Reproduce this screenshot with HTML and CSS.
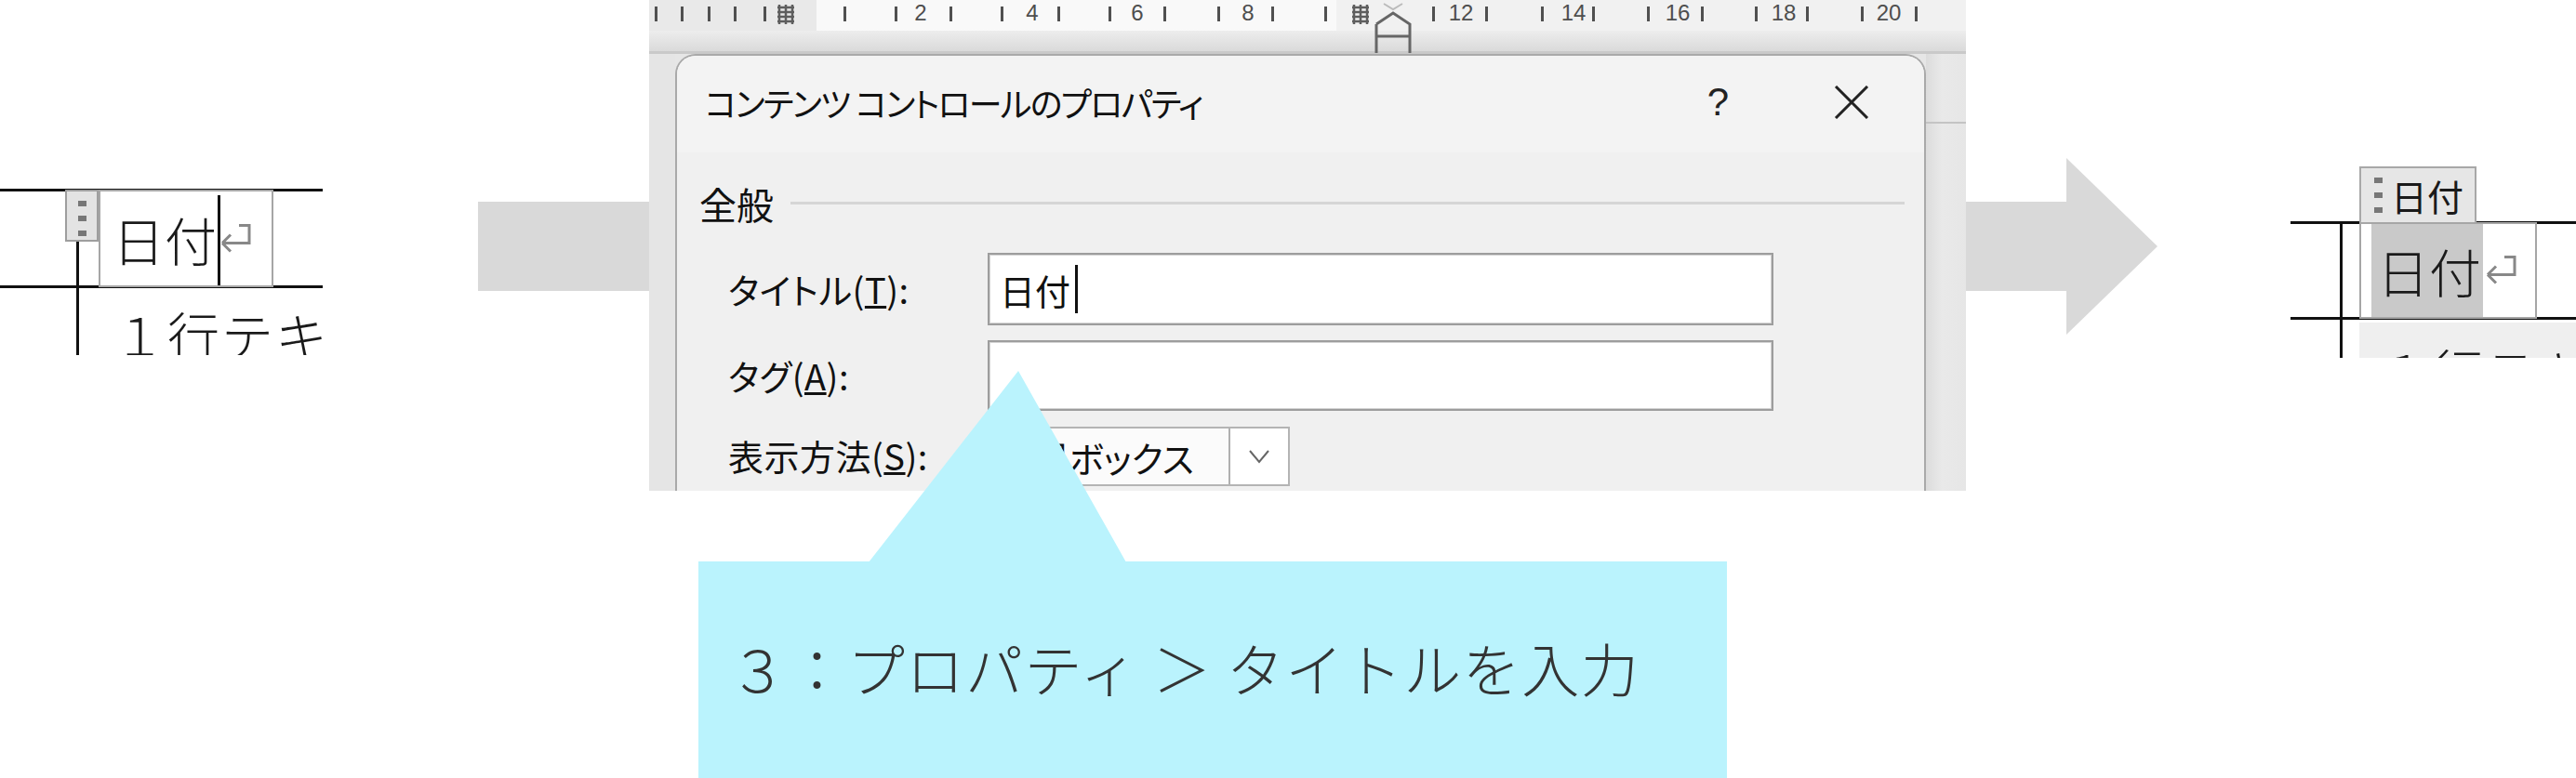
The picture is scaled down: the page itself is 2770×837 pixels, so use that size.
FILE: index.html
```html
<!DOCTYPE html>
<html lang="ja">
<head>
    <meta charset="UTF-8">
    <title>コンテンツ コントロールのプロパティ</title>
    <link rel="stylesheet" href="styles.css">
</head>
<body>
    <div class="slide">
        <!-- before: content control in the table cell -->
        <div class="snippet snippet-before">
            <div class="row-line row-top"></div>
            <div class="row-line row-bottom"></div>
            <div class="col-line"></div>
            <div class="cc-box">
                <span class="doc-text">日付</span>
                <i class="caret caret-doc"></i>
                <svg class="para-mark" viewBox="0 0 36 32"><path d="M22 3 H33 V22 H4 M4 22 L13 13 M4 22 L13 31"/></svg>
            </div>
            <div class="cc-grip"><i></i><i></i><i></i></div>
            <div class="doc-text next-line">１行テキ</div>
        </div>

        <svg class="flow-arrow" viewBox="0 0 1806 190"><polygon points="0,47 1708,47 1708,0 1806,95 1708,190 1708,143 0,143"/></svg>

        <!-- dialog screenshot -->
        <div class="shot">
            <svg class="ruler" viewBox="0 0 1416 58">
                <defs>
                    <linearGradient id="shade" x1="0" y1="0" x2="0" y2="1">
                        <stop offset="0" stop-color="#ededed"/>
                        <stop offset="1" stop-color="#dadada"/>
                    </linearGradient>
                </defs>
                <rect x="0" y="0" width="180" height="33" fill="#e9e9e9"/>
                <rect x="180" y="0" width="559" height="33" fill="#f9f9f9"/>
                <rect x="739" y="0" width="677" height="33" fill="#f1f1f1"/>
                <rect x="0" y="33" width="1416" height="22" fill="url(#shade)"/>
                <rect x="0" y="55" width="1416" height="3" fill="#c9c9c9"/>
                <g fill="#505050">
                    <rect x="6" y="7" width="3" height="16"/><rect x="34" y="7" width="3" height="16"/>
                    <rect x="63" y="7" width="3" height="16"/><rect x="91" y="7" width="3" height="16"/>
                    <rect x="123" y="7" width="3" height="16"/><rect x="209" y="7" width="3" height="16"/>
                    <rect x="264" y="7" width="3" height="16"/><rect x="323" y="7" width="3" height="16"/>
                    <rect x="378" y="7" width="3" height="16"/><rect x="439" y="7" width="3" height="16"/>
                    <rect x="494" y="7" width="3" height="16"/><rect x="553" y="7" width="3" height="16"/>
                    <rect x="611" y="7" width="3" height="16"/><rect x="669" y="7" width="3" height="16"/>
                    <rect x="726" y="7" width="3" height="16"/><rect x="842" y="7" width="3" height="16"/>
                    <rect x="899" y="7" width="3" height="16"/><rect x="959" y="7" width="3" height="16"/>
                    <rect x="1014" y="7" width="3" height="16"/><rect x="1073" y="7" width="3" height="16"/>
                    <rect x="1131" y="7" width="3" height="16"/><rect x="1189" y="7" width="3" height="16"/>
                    <rect x="1244" y="7" width="3" height="16"/><rect x="1303" y="7" width="3" height="16"/>
                    <rect x="1361" y="7" width="3" height="16"/>
                </g>
                <g class="ruler-num" text-anchor="middle">
                    <text x="292" y="22">2</text><text x="412" y="22">4</text>
                    <text x="525" y="22">6</text><text x="644" y="22">8</text>
                    <text x="873" y="22">12</text><text x="994" y="22">14</text>
                    <text x="1106" y="22">16</text><text x="1220" y="22">18</text>
                    <text x="1333" y="22">20</text>
                </g>
                <g stroke="#5e5e5e" stroke-width="2.5" fill="none">
                    <path d="M140 5 V26 M147 5 V26 M154 5 V26 M138 8 H156 M138 13 H156 M138 18 H156 M138 23 H156"/>
                    <path d="M758 5 V26 M765 5 V26 M772 5 V26 M756 8 H774 M756 13 H774 M756 18 H774 M756 23 H774"/>
                </g>
                <path d="M782 26 L800 14 L818 26 V57 M782 26 V57 M782 39 H818" stroke="#666" stroke-width="3" fill="none"/>
                <path d="M790 4 L800 10 L810 4" stroke="#bbb" stroke-width="2" fill="none"/>
            </svg>
            <div class="shot-body">
                <div class="side side-left"></div>
                <div class="dialog">
                    <div class="dialog-title">
                        <span class="title-text">コンテンツ コントロールのプロパティ</span>
                        <span class="title-help">?</span>
                        <svg class="title-close" viewBox="0 0 38 36"><path d="M2 1 L36 35 M36 1 L2 35"/></svg>
                    </div>
                    <div class="dialog-body">
                        <div class="group-head">
                            <span>全般</span>
                            <i class="group-rule"></i>
                        </div>
                        <div class="fields">
                            <label class="field-label">タイトル(<u>T</u>):</label>
                            <div class="input"><span>日付</span><i class="caret caret-input"></i></div>
                            <label class="field-label">タグ(<u>A</u>):</label>
                            <div class="input"></div>
                            <label class="field-label">表示方法(<u>S</u>):</label>
                            <div class="combo">
                                <span class="combo-value">境界ボックス</span>
                                <span class="combo-btn"><svg viewBox="0 0 24 16"><path d="M2 2 L12 14 L22 2"/></svg></span>
                            </div>
                        </div>
                    </div>
                </div>
                <div class="side side-right"><i></i></div>
            </div>
        </div>

        <div class="callout">
            <p class="callout-text">３：プロパティ ＞ タイトルを入力</p>
        </div>

        <!-- after: title tab shown above the control -->
        <div class="snippet snippet-after">
            <div class="row-line row-top"></div>
            <div class="row-line row-bottom"></div>
            <div class="col-line"></div>
            <div class="below-cell"><span class="doc-text">１行テキ</span></div>
            <div class="cc-box">
                <span class="doc-text selected">日付</span>
                <svg class="para-mark" viewBox="0 0 36 32"><path d="M22 3 H33 V22 H4 M4 22 L13 13 M4 22 L13 31"/></svg>
            </div>
            <div class="cc-tab">
                <span class="tab-dots"><i></i><i></i><i></i></span>
                <span class="tab-text">日付</span>
            </div>
        </div>
    </div>
</body>
</html>
```

FILE: styles.css
```css
body {
    margin: 0;
    background: #fff;
    font-family: "Noto Sans CJK JP", "Noto Sans", sans-serif;
    color: #111;
}

.slide {
    position: relative;
    width: 2770px;
    height: 837px;
    overflow: hidden;
    background: #fff;
}

/* ---- document snippets ---- */
.snippet {
    position: absolute;
    overflow: hidden;
}

.snippet-before {
    left: 0;
    top: 200px;
    width: 347px;
    height: 182px;
}

.snippet-after {
    left: 2463px;
    top: 170px;
    width: 307px;
    height: 215px;
}

.row-line {
    position: absolute;
    left: 0;
    right: 0;
    height: 3px;
    background: #111;
}

.snippet-before .row-top { top: 3px; }
.snippet-before .row-bottom { top: 107px; }

.snippet-after .row-top { top: 68px; }
.snippet-after .row-bottom { top: 171px; }

.col-line {
    position: absolute;
    bottom: 0;
    width: 3px;
    background: #111;
}

.snippet-before .col-line { left: 82px; top: 3px; }
.snippet-after .col-line { left: 53px; top: 68px; }

.doc-text {
    font-size: 56px;
    font-weight: 300;
    line-height: 1;
    color: #1a1a1a;
    white-space: nowrap;
}

.cc-box {
    position: absolute;
    display: flex;
    align-items: center;
    box-sizing: border-box;
    border: 2px solid #a6a6a6;
    background: #fff;
}

.snippet-before .cc-box {
    left: 106px;
    top: 4px;
    width: 188px;
    height: 105px;
    padding-left: 13px;
}

.snippet-after .cc-box {
    left: 74px;
    top: 69px;
    width: 191px;
    height: 104px;
    padding-left: 11px;
}

.caret {
    display: block;
    width: 3px;
    background: #111;
}

.caret-doc {
    height: 97px;
    margin-left: 1px;
    align-self: flex-start;
    margin-top: 4px;
}

.para-mark {
    width: 36px;
    height: 33px;
    fill: none;
    stroke: #888;
    stroke-width: 3;
}

.snippet-before .para-mark { margin-left: -2px; margin-top: -2px; }
.snippet-after .para-mark { margin-left: 1px; margin-top: -4px; }

.cc-grip {
    position: absolute;
    left: 70px;
    top: 4px;
    width: 36px;
    height: 56px;
    box-sizing: border-box;
    border: 2px solid #9e9e9e;
    background: #e3e3e3;
    display: flex;
    flex-direction: column;
    align-items: center;
    gap: 10px;
    padding-top: 10px;
}

.cc-grip i,
.tab-dots i {
    display: block;
    width: 9px;
    height: 6px;
    background: #777;
}

.next-line {
    position: absolute;
    left: 122px;
    top: 131px;
    letter-spacing: 2px;
}

.selected {
    background: #c9c9c9;
    align-self: stretch;
    display: flex;
    align-items: center;
    padding: 0 2px 0 6px;
}

.cc-tab {
    position: absolute;
    left: 74px;
    top: 9px;
    width: 126px;
    height: 60px;
    box-sizing: border-box;
    border: 2px solid #a8a8a8;
    border-bottom: none;
    background: #e6e6e6;
    display: flex;
    align-items: center;
    padding-left: 14px;
    gap: 9px;
}

.tab-dots {
    display: flex;
    flex-direction: column;
    gap: 10px;
}

.tab-text {
    font-size: 39px;
    line-height: 1;
    color: #1a1a1a;
}

.below-cell {
    position: absolute;
    left: 74px;
    right: 0;
    top: 177px;
    bottom: 0;
    background: #efefef;
    padding-left: 22px;
    padding-top: 24px;
}

/* ---- big arrow ---- */
.flow-arrow {
    position: absolute;
    left: 514px;
    top: 170px;
    width: 1806px;
    height: 190px;
    fill: #d9d9d9;
}

/* ---- dialog screenshot ---- */
.shot {
    position: absolute;
    left: 698px;
    top: 0;
    width: 1416px;
    height: 528px;
    overflow: hidden;
    background: #e6e6e6;
    display: flex;
    flex-direction: column;
}

.ruler {
    display: block;
    width: 1416px;
    height: 58px;
    flex: none;
}

.ruler-num {
    font-family: "Liberation Sans", sans-serif;
    font-size: 24px;
    fill: #4e4e4e;
}

.shot-body {
    display: flex;
    flex: 1;
}

.side-left {
    width: 28px;
    background: #e5e5e5;
}

.side-right {
    flex: 1;
    background: linear-gradient(90deg, #dcdcdc, #e9e9e9 40%, #e6e6e6);
    padding-top: 73px;
}

.side-right i {
    display: block;
    height: 2px;
    background: #c4c4c4;
}

.dialog {
    width: 1345px;
    box-sizing: border-box;
    border: 2px solid #a9a9a9;
    border-bottom: none;
    border-radius: 22px 22px 0 0;
    background: #f0f0f0;
    overflow: hidden;
    font-feature-settings: "palt";
}

.dialog-title {
    height: 100px;
    background: #f3f3f3;
    display: flex;
    align-items: center;
    padding: 0 59px 4px 30px;
}

.title-text {
    font-size: 36px;
    color: #111;
    letter-spacing: -1.7px;
}

.title-help {
    margin-left: auto;
    font-family: "Liberation Sans", sans-serif;
    font-size: 42px;
    color: #222;
}

.title-close {
    width: 38px;
    height: 36px;
    margin-left: 113px;
    stroke: #222;
    stroke-width: 3;
}

.dialog-body {
    padding: 35px 21px 0 24px;
}

.group-head {
    display: flex;
    align-items: center;
    gap: 18px;
    height: 40px;
    font-size: 40px;
    line-height: 1;
}

.group-rule {
    flex: 1;
    height: 3px;
    background: #d6d6d6;
    margin-top: -2px;
}

.fields {
    display: grid;
    grid-template-columns: 279px 845px;
    grid-template-rows: 78px 76px 64px;
    row-gap: 16px;
    align-items: center;
    margin-top: 33px;
    padding-left: 31px;
}

.field-label {
    font-size: 38px;
    line-height: 1;
    color: #111;
    letter-spacing: 0.5px;
}

.input {
    height: 100%;
    box-sizing: border-box;
    border: 2px solid #9d9d9d;
    box-shadow: inset 0 0 0 1px #d4d4d4;
    background: #fff;
    display: flex;
    align-items: center;
    padding-left: 11px;
    font-size: 38px;
}

.caret-input {
    height: 52px;
    margin-left: 5px;
}

.combo {
    height: 64px;
    margin-top: 2px;
    width: 325px;
    box-sizing: border-box;
    border: 2px solid #b4b4b4;
    background: #fbfbfb;
    display: flex;
    align-items: center;
    font-size: 38px;
}

.combo-value {
    flex: 1;
    padding-left: 10px;
}

.combo-btn {
    width: 64px;
    height: 100%;
    box-sizing: border-box;
    border-left: 2px solid #b0b0b0;
    background: #fff;
    display: flex;
    align-items: center;
    justify-content: center;
}

.combo-btn svg {
    width: 24px;
    height: 16px;
    fill: none;
    stroke: #666;
    stroke-width: 2;
}

/* ---- callout ---- */
.callout {
    position: absolute;
    left: 751px;
    top: 604px;
    width: 1106px;
    height: 233px;
    background: #baf3fd;
    display: flex;
    align-items: center;
}

.callout::before {
    content: "";
    position: absolute;
    left: 183px;
    top: -205px;
    width: 277px;
    height: 206px;
    background: #baf3fd;
    clip-path: polygon(161px 0, 100% 100%, 0 100%);
}

.callout-text {
    margin: 0 0 6px 33px;
    font-size: 62px;
    font-weight: 300;
    line-height: 1;
    color: #333;
    letter-spacing: 1.5px;
    white-space: nowrap;
}
```
